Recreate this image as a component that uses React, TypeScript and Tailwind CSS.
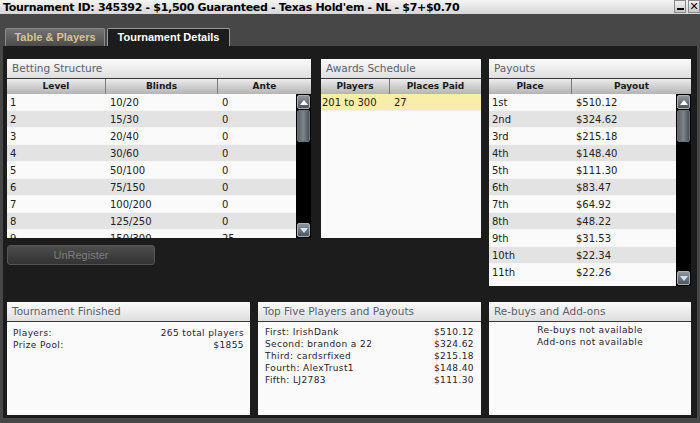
import React from 'react';

const font = { fontFamily: '"DejaVu Sans", Verdana, sans-serif' };
const tabFont = { fontFamily: '"Liberation Sans", Arial, sans-serif' };

const blinds = [
    ['1', '10/20', '0'],
    ['2', '15/30', '0'],
    ['3', '20/40', '0'],
    ['4', '30/60', '0'],
    ['5', '50/100', '0'],
    ['6', '75/150', '0'],
    ['7', '100/200', '0'],
    ['8', '125/250', '0'],
    ['9', '150/300', '25'],
];

const payouts = [
    ['1st', '$510.12'],
    ['2nd', '$324.62'],
    ['3rd', '$215.18'],
    ['4th', '$148.40'],
    ['5th', '$111.30'],
    ['6th', '$83.47'],
    ['7th', '$64.92'],
    ['8th', '$48.22'],
    ['9th', '$31.53'],
    ['10th', '$22.34'],
    ['11th', '$22.26'],
];

const topFive = [
    ['First: IrishDank', '$510.12'],
    ['Second: brandon a 22', '$324.62'],
    ['Third: cardsrfixed', '$215.18'],
    ['Fourth: AlexTrust1', '$148.40'],
    ['Fifth: LJ2783', '$111.30'],
];

const PanelHeader = ({ title }: { title: string }) => (
    <div className="h-[20px] shrink-0 flex items-center pl-[5px] bg-gradient-to-b from-[#fbfbfb] to-[#dedede] border-b border-[#3a3a3a] text-[10.5px] text-[#5a6070]">
        {title}
    </div>
);

const ColHeader = ({ label, className }: { label: string; className: string }) => (
    <div className={`h-full flex items-center justify-center border-r border-[#7a7a7a] text-[9px] font-bold text-[#1a1a1a] ${className}`}>
        {label}
    </div>
);

const Scrollbar = () => (
    <div className="absolute right-0 top-0 bottom-0 w-[15px] bg-black flex flex-col justify-between py-px">
        <div>
            <div className="h-[14px] mx-px rounded-[2px] bg-gradient-to-b from-[#8d969e] to-[#4e565d] border border-[#aab2b8] flex items-center justify-center">
                <div className="w-0 h-0 border-l-[4px] border-r-[4px] border-b-[5px] border-l-transparent border-r-transparent border-b-white" />
            </div>
            <div className="h-[32px] mx-px mt-px rounded-[2px] bg-gradient-to-r from-[#5c6469] via-[#7c858b] to-[#4a5257] border border-[#6a7278]" />
        </div>
        <div className="h-[14px] mx-px rounded-[2px] bg-gradient-to-b from-[#8d969e] to-[#4e565d] border border-[#aab2b8] flex items-center justify-center">
            <div className="w-0 h-0 border-l-[4px] border-r-[4px] border-t-[5px] border-l-transparent border-r-transparent border-t-[#cfe4f2]" />
        </div>
    </div>
);

const App = () => {
    return (
        <div className="w-[700px] h-[423px] bg-[#474747] flex flex-col overflow-hidden" style={font}>
            {/* Title bar */}
            <div className="h-[14px] shrink-0 flex items-center justify-between bg-gradient-to-b from-[#f4f4f4] to-[#d6d6d6] pl-[3px]">
                <span className="text-[11px] font-bold text-black leading-none tracking-[-0.3px] whitespace-nowrap">
                    Tournament ID: 345392 - $1,500 Guaranteed - Texas Hold'em - NL - $7+$0.70
                </span>
                <div className="flex gap-[2px] h-full items-start">
                    <div className="w-[12px] h-[13px] border border-[#8a8a8a] bg-gradient-to-b from-[#f2f2f2] to-[#c8c8c8] flex items-end justify-center pb-[2px]">
                        <div className="w-[7px] h-[2px] bg-black" />
                    </div>
                    <div className="w-[12px] h-[13px] border border-[#8a8a8a] bg-gradient-to-b from-[#f2f2f2] to-[#c8c8c8] flex items-center justify-center text-[11px] font-bold leading-none">
                        ✕
                    </div>
                </div>
            </div>

            {/* Tabs */}
            <div className="h-[32px] shrink-0 flex items-end pl-[5px] gap-[2px]" style={tabFont}>
                <div className="h-[18px] w-[100px] flex items-center justify-center rounded-t-[2px] bg-gradient-to-b from-[#737373] to-[#4c4c4c] border-t border-x border-[#8a8a8a] text-[11px] font-bold text-[#d9c38e] whitespace-nowrap">
                    Table &amp; Players
                </div>
                <div className="h-[18px] w-[123px] flex items-center justify-center rounded-t-[2px] bg-[#1c1c1c] border-t border-x border-[#9a9a9a] text-[11px] font-bold text-white whitespace-nowrap">
                    Tournament Details
                </div>
            </div>

            {/* Content */}
            <div className="flex-1 mx-[3px] mb-[5px] bg-[#1c1c1c] pt-[13px] px-[4px] flex flex-col">
                <div className="flex items-start h-[227px]">
                    {/* Betting Structure */}
                    <div className="w-[304px] flex flex-col">
                        <div className="h-[179px] bg-[#fafafa] flex flex-col">
                            <PanelHeader title="Betting Structure" />
                            <div className="h-[15px] shrink-0 flex bg-gradient-to-b from-[#ececec] to-[#b4b4b4]">
                                <ColHeader label="Level" className="w-[99px]" />
                                <ColHeader label="Blinds" className="w-[112px]" />
                                <ColHeader label="Ante" className="flex-1 border-r-0" />
                            </div>
                            <div className="relative flex-1 overflow-hidden">
                                {blinds.map((row, i) => (
                                    <div
                                        key={`blind-${i}`}
                                        className={`h-[17px] flex items-center text-[10px] text-[#222] border-b border-[#f6f6f6] ${i % 2 === 0 ? 'bg-[#fafafa]' : 'bg-[#e3e3e3]'}`}
                                    >
                                        <div className="w-[99px] pl-[3px]">{row[0]}</div>
                                        <div className="w-[112px] pl-[4px]">{row[1]}</div>
                                        <div className="pl-[4px]">{row[2]}</div>
                                    </div>
                                ))}
                                <Scrollbar />
                            </div>
                        </div>
                        <div className="mt-[7px] h-[20px] w-[148px] rounded-[3px] bg-gradient-to-b from-[#4d4d4d] to-[#333] border border-[#555] flex items-center justify-center text-[11px] text-[#7d7d7d]" style={tabFont}>
                            UnRegister
                        </div>
                    </div>

                    {/* Awards Schedule */}
                    <div className="ml-[10px] w-[160px] h-[179px] bg-[#fafafa] flex flex-col">
                        <PanelHeader title="Awards Schedule" />
                        <div className="h-[15px] shrink-0 flex bg-gradient-to-b from-[#ececec] to-[#b4b4b4]">
                            <ColHeader label="Players" className="w-[69px]" />
                            <ColHeader label="Places Paid" className="flex-1 border-r-0" />
                        </div>
                        <div className="h-[17px] flex items-center bg-[#f8eda9] text-[10px] text-[#222] border-b border-[#eee]">
                            <div className="w-[69px] pl-px">201 to 300</div>
                            <div className="pl-[4px]">27</div>
                        </div>
                    </div>

                    {/* Payouts */}
                    <div className="ml-[8px] w-[202px] h-[227px] bg-[#fafafa] flex flex-col">
                        <PanelHeader title="Payouts" />
                        <div className="h-[15px] shrink-0 flex bg-gradient-to-b from-[#ececec] to-[#b4b4b4]">
                            <ColHeader label="Place" className="w-[83px]" />
                            <ColHeader label="Payout" className="flex-1 border-r-0" />
                        </div>
                        <div className="relative flex-1 overflow-hidden">
                            {payouts.map((row, i) => (
                                <div
                                    key={`pay-${i}`}
                                    className={`h-[17px] flex items-center text-[10px] text-[#222] border-b border-[#f6f6f6] ${i % 2 === 0 ? 'bg-[#fafafa]' : 'bg-[#e3e3e3]'}`}
                                >
                                    <div className="w-[83px] pl-[3px]">{row[0]}</div>
                                    <div className="pl-[4px]">{row[1]}</div>
                                </div>
                            ))}
                            <Scrollbar />
                        </div>
                    </div>
                </div>

                {/* Bottom row */}
                <div className="mt-[16px] flex gap-[8px] h-[113px]">
                    <div className="w-[243px] bg-[#fafafa] flex flex-col">
                        <PanelHeader title="Tournament Finished" />
                        <div className="px-[6px] pt-[5px] text-[9px] tracking-[0.4px] text-[#2a2030] leading-[12px]">
                            <div className="flex justify-between"><span>Players:</span><span>265 total players</span></div>
                            <div className="flex justify-between"><span>Prize Pool:</span><span>$1855</span></div>
                        </div>
                    </div>
                    <div className="w-[223px] bg-[#fafafa] flex flex-col">
                        <PanelHeader title="Top Five Players and Payouts" />
                        <div className="px-[7px] pt-[4px] text-[9px] tracking-[0.4px] text-[#2a2030] leading-[12px]">
                            {topFive.map((row, i) => (
                                <div key={`top-${i}`} className="flex justify-between">
                                    <span>{row[0]}</span>
                                    <span>{row[1]}</span>
                                </div>
                            ))}
                        </div>
                    </div>
                    <div className="w-[202px] bg-[#fafafa] flex flex-col">
                        <PanelHeader title="Re-buys and Add-ons" />
                        <div className="pt-[2px] text-[9px] tracking-[0.4px] text-[#2a2030] leading-[12px] text-center">
                            <div>Re-buys not available</div>
                            <div>Add-ons not available</div>
                        </div>
                    </div>
                </div>
            </div>
        </div>
    );
};

export default App;
